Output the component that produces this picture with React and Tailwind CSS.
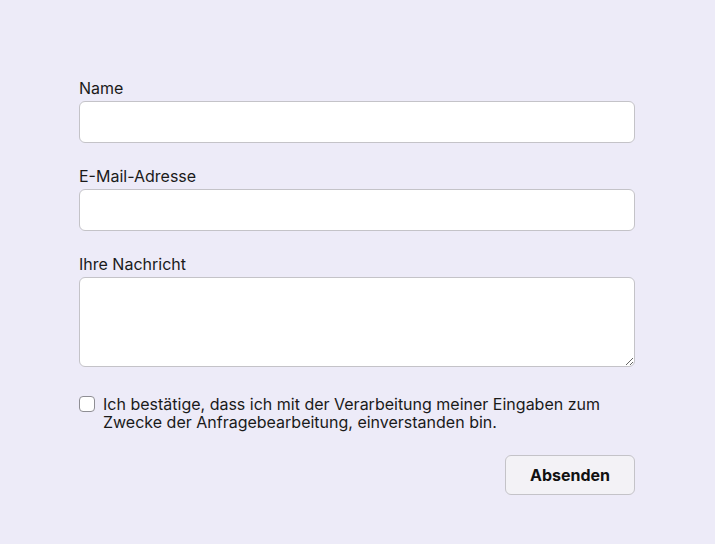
import React from 'react';

const Field = ({ label, children }) => (
  <div className="flex flex-col">
    <label className="text-[16px] leading-[19px] text-[#1a1a1a] mb-[3px]">{label}</label>
    {children}
  </div>
);

const inputCls =
  'w-full h-[42px] rounded-[6px] border border-[#c4c3c8] bg-white px-3 text-[16px] outline-none';

export default function App() {
  return (
    <div
      className="min-h-[544px] w-full bg-[#edebf8] pt-[79px] pl-[79px]"
      style={{ fontFamily: 'Inter, "Noto Sans", sans-serif' }}
    >
      <form className="w-[556px] flex flex-col gap-[24px]">
        <Field label="Name">
          <input type="text" className={inputCls} />
        </Field>
        <Field label="E-Mail-Adresse">
          <input type="email" className={inputCls} />
        </Field>
        <Field label="Ihre Nachricht">
          <textarea className="w-full h-[90px] rounded-[6px] border border-[#c4c3c8] bg-white px-3 py-2 text-[16px] outline-none" />
        </Field>

        <label className="flex items-start gap-[8px] mt-[4px] text-[16px] leading-[18px] text-[#1a1a1a]">
          <span className="mt-[1px] w-[16px] h-[16px] shrink-0 rounded-[4px] border border-[#8f8e94] bg-white" />
          <span>
            Ich bestätige, dass ich mit der Verarbeitung meiner Eingaben zum Zwecke der
            Anfragebearbeitung, einverstanden bin.
          </span>
        </label>

        <div className="flex justify-end">
          <button
            type="button"
            className="w-[130px] h-[40px] rounded-[6px] border border-[#c4c3c8] bg-[#f3f2f6] text-[16px] font-bold text-[#111]"
          >
            Absenden
          </button>
        </div>
      </form>
    </div>
  );
}
